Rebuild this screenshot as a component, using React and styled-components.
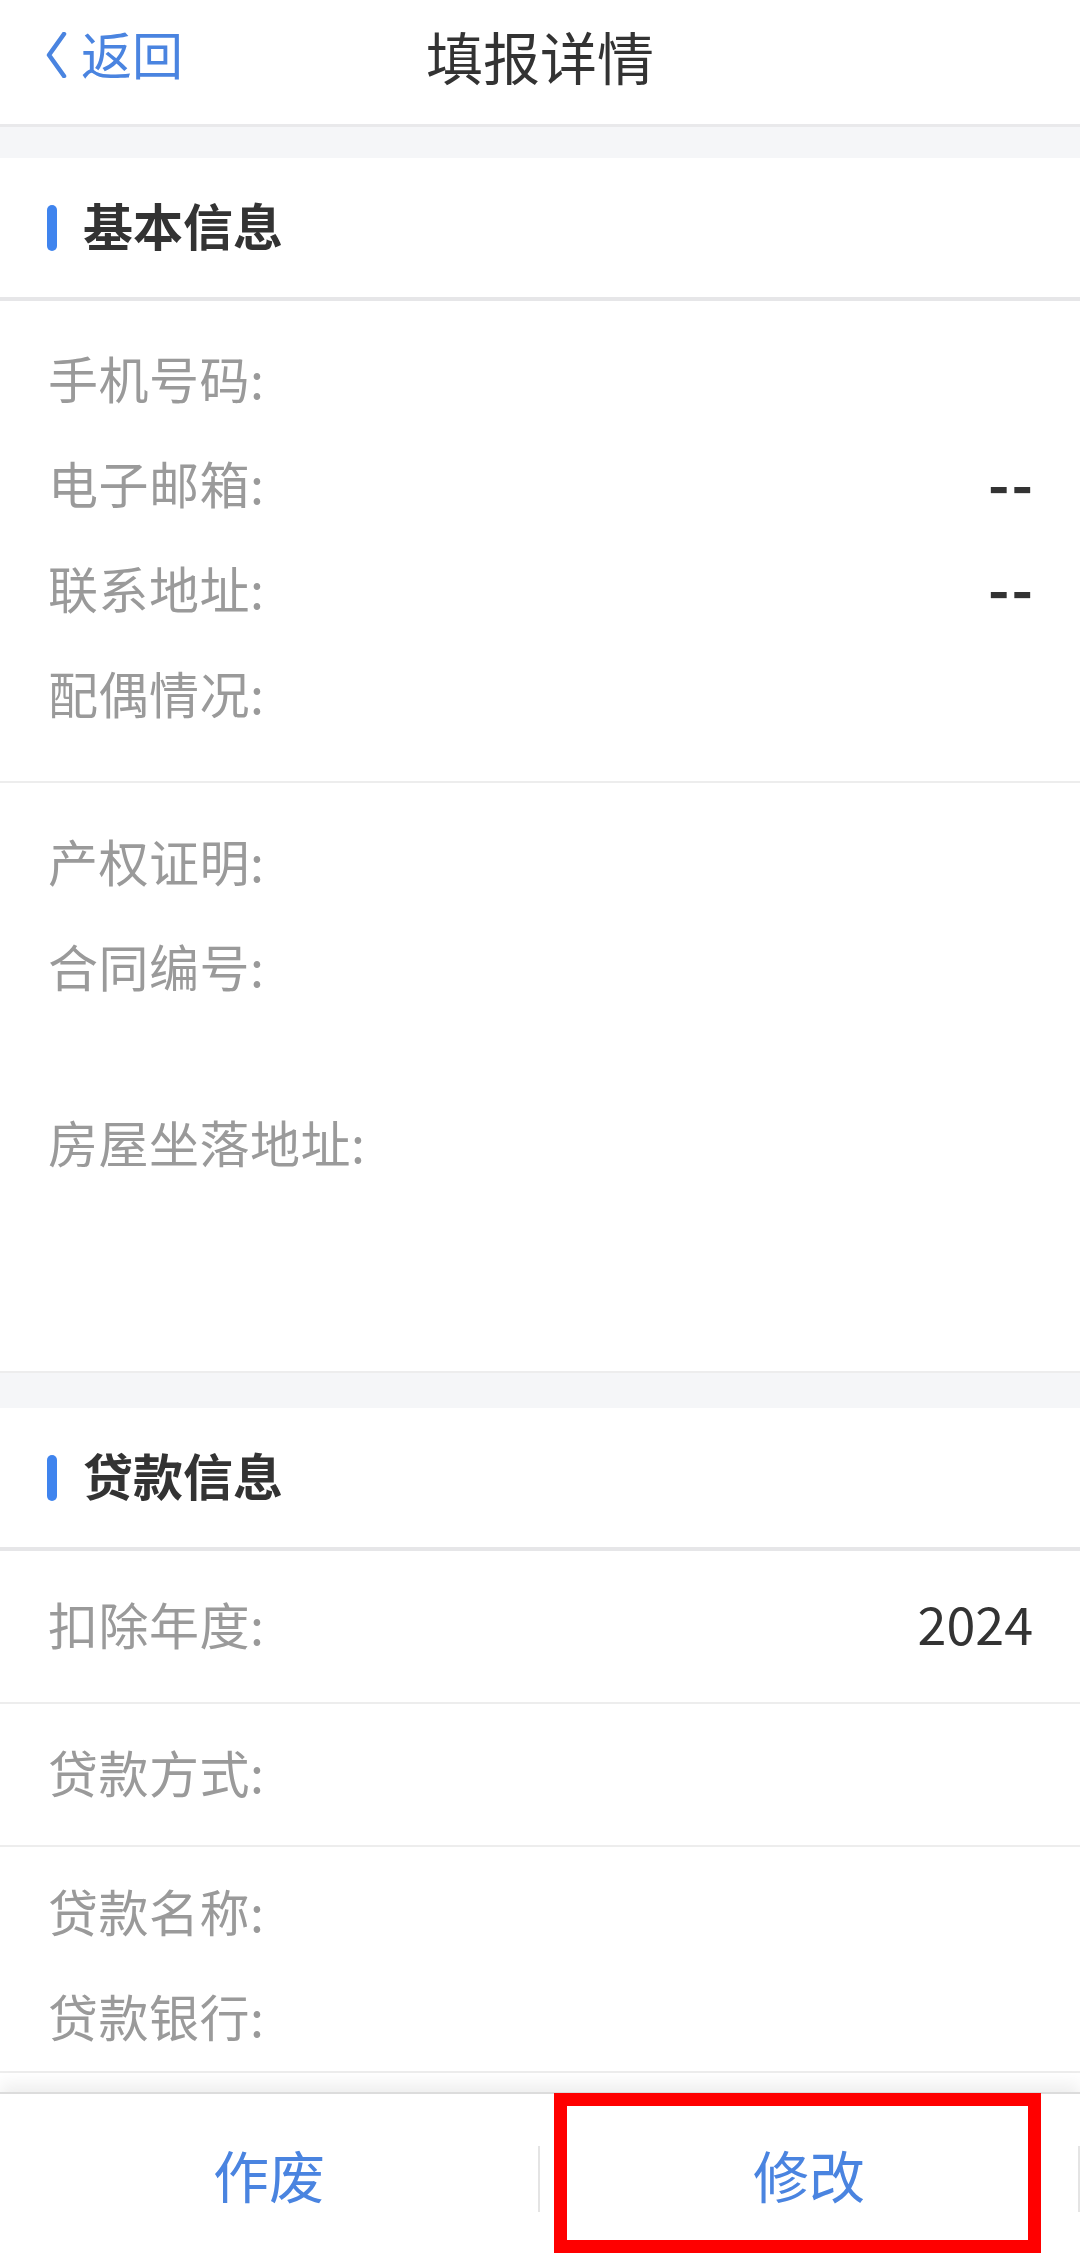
import styled, { createGlobalStyle } from "styled-components";

const GlobalStyle = createGlobalStyle`
    * {
        box-sizing: border-box;
    }
    body {
        margin: 0;
        background: #FFF;
        font-family: "Noto Sans CJK SC", "Noto Sans", sans-serif;
    }
`;

const basicGroups = [
    {
        pad: "27px 0 33px",
        rows: [
            { label: "手机号码:", value: "" },
            { label: "电子邮箱:", value: "--" },
            { label: "联系地址:", value: "--" },
            { label: "配偶情况:", value: "" },
        ],
    },
    {
        pad: "28px 0 0",
        rows: [
            { label: "产权证明:", value: "" },
            { label: "合同编号:", value: "", height: 176 },
            { label: "房屋坐落地址:", value: "", height: 279 },
        ],
    },
];

const loanGroups = [
    { pad: "23px 0", rows: [{ label: "扣除年度:", value: "2024" }] },
    { pad: "18px 0", rows: [{ label: "贷款方式:", value: "" }] },
    {
        pad: "14px 0 0",
        rows: [
            { label: "贷款名称:", value: "" },
            { label: "贷款银行:", value: "" },
        ],
    },
];

function Section({ title, groups }) {
    return (
        <>
            <SectionHeader>
                <Mark />
                <SectionTitle>{title}</SectionTitle>
            </SectionHeader>
            {groups.map((g, i) => (
                <Group key={i} pad={g.pad}>
                    {g.rows.map(r => (
                        <Row key={r.label} height={r.height}>
                            <Label>{r.label}</Label>
                            <Value dashed={r.value === "--"}>{r.value}</Value>
                        </Row>
                    ))}
                </Group>
            ))}
        </>
    );
}

export default function App() {
    return (
        <Page>
            <GlobalStyle />
            <Header>
                <Back>
                    <svg width="22" height="46" viewBox="0 0 22 46">
                        <path d="M19 2 L4 23 L19 44" fill="none" stroke="#4A84E0" strokeWidth="4.5" strokeLinecap="round" strokeLinejoin="round" />
                    </svg>
                    <span>返回</span>
                </Back>
                <Title>填报详情</Title>
                <div />
            </Header>
            <Content>
                <Band height={31} />
                <Section title="基本信息" groups={basicGroups} />
                <Band height={35} />
                <Section title="贷款信息" groups={loanGroups} />
            </Content>
            <Footer>
                <Action>作废</Action>
                <Action>修改</Action>
                <Highlight />
            </Footer>
        </Page>
    );
}

const Page = styled.div`
    width: 1080px;
    height: 2264px;
    display: flex;
    flex-direction: column;
    overflow: hidden;
    background: #FFF;
`;

const Header = styled.div`
    flex: 0 0 127px;
    display: grid;
    grid-template-columns: 1fr auto 1fr;
    align-items: center;
    padding: 0 45px 14px;
    border-bottom: 3px solid #E9E9EB;
`;

const Back = styled.div`
    display: flex;
    align-items: center;
    gap: 14px;
    color: #4A84E0;
    font-size: 51px;
    span {
        line-height: 1;
        padding-bottom: 4px;
    }
`;

const Title = styled.h1`
    margin: 0;
    font-size: 57px;
    font-weight: 400;
    color: #333;
    line-height: 1;
`;

const Content = styled.div`
    flex: 1;
    overflow: hidden;
`;

const Band = styled.div`
    height: ${props => props.height}px;
    background: #F5F6F8;
`;

const SectionHeader = styled.div`
    height: 143px;
    display: flex;
    align-items: center;
    gap: 26px;
    padding: 0 47px;
    border-bottom: 4px solid #E6E6E8;
`;

const Mark = styled.div`
    width: 10px;
    height: 46px;
    border-radius: 5px;
    background: #3F84EE;
`;

const SectionTitle = styled.h2`
    margin: 0 0 8px;
    font-size: 50px;
    font-weight: 700;
    color: #333;
    line-height: 1;
`;

const Group = styled.div`
    padding: ${props => props.pad};
    border-bottom: 2px solid #EDEDED;
`;

const Row = styled.div`
    height: ${props => props.height || 105}px;
    display: flex;
    justify-content: space-between;
    align-items: flex-start;
    padding: 0 47px 0 48px;
`;

const Label = styled.div`
    height: 105px;
    display: flex;
    align-items: center;
    padding-bottom: 8px;
    font-size: 50px;
    color: #9A9A9A;
    letter-spacing: 0.5px;
`;

const Value = styled.div`
    height: 105px;
    display: flex;
    align-items: center;
    padding-bottom: 8px;
    font-size: ${props => props.dashed ? "58px" : "52px"};
    font-weight: ${props => props.dashed ? 700 : 400};
    color: #333;
    letter-spacing: ${props => props.dashed ? "2px" : "0"};
    margin-right: ${props => props.dashed ? "-2px" : "0"};
`;

const Footer = styled.div`
    position: relative;
    flex: 0 0 172px;
    display: flex;
    align-items: center;
    background: #FFF;
    border-top: 2px solid #DCDCDC;
    box-shadow: 0 -8px 16px rgba(0, 0, 0, 0.07);
`;

const Action = styled.button`
    flex: 1;
    height: 66px;
    border: none;
    border-right: 2px solid #E4E4E4;
    background: none;
    padding: 0 0 14px;
    font-family: inherit;
    font-size: 56px;
    color: #4A84E0;
    line-height: 1;
`;

const Highlight = styled.div`
    position: absolute;
    left: 554px;
    top: -1px;
    width: 487px;
    height: 160px;
    border: 13px solid #FF0000;
    pointer-events: none;
`;
